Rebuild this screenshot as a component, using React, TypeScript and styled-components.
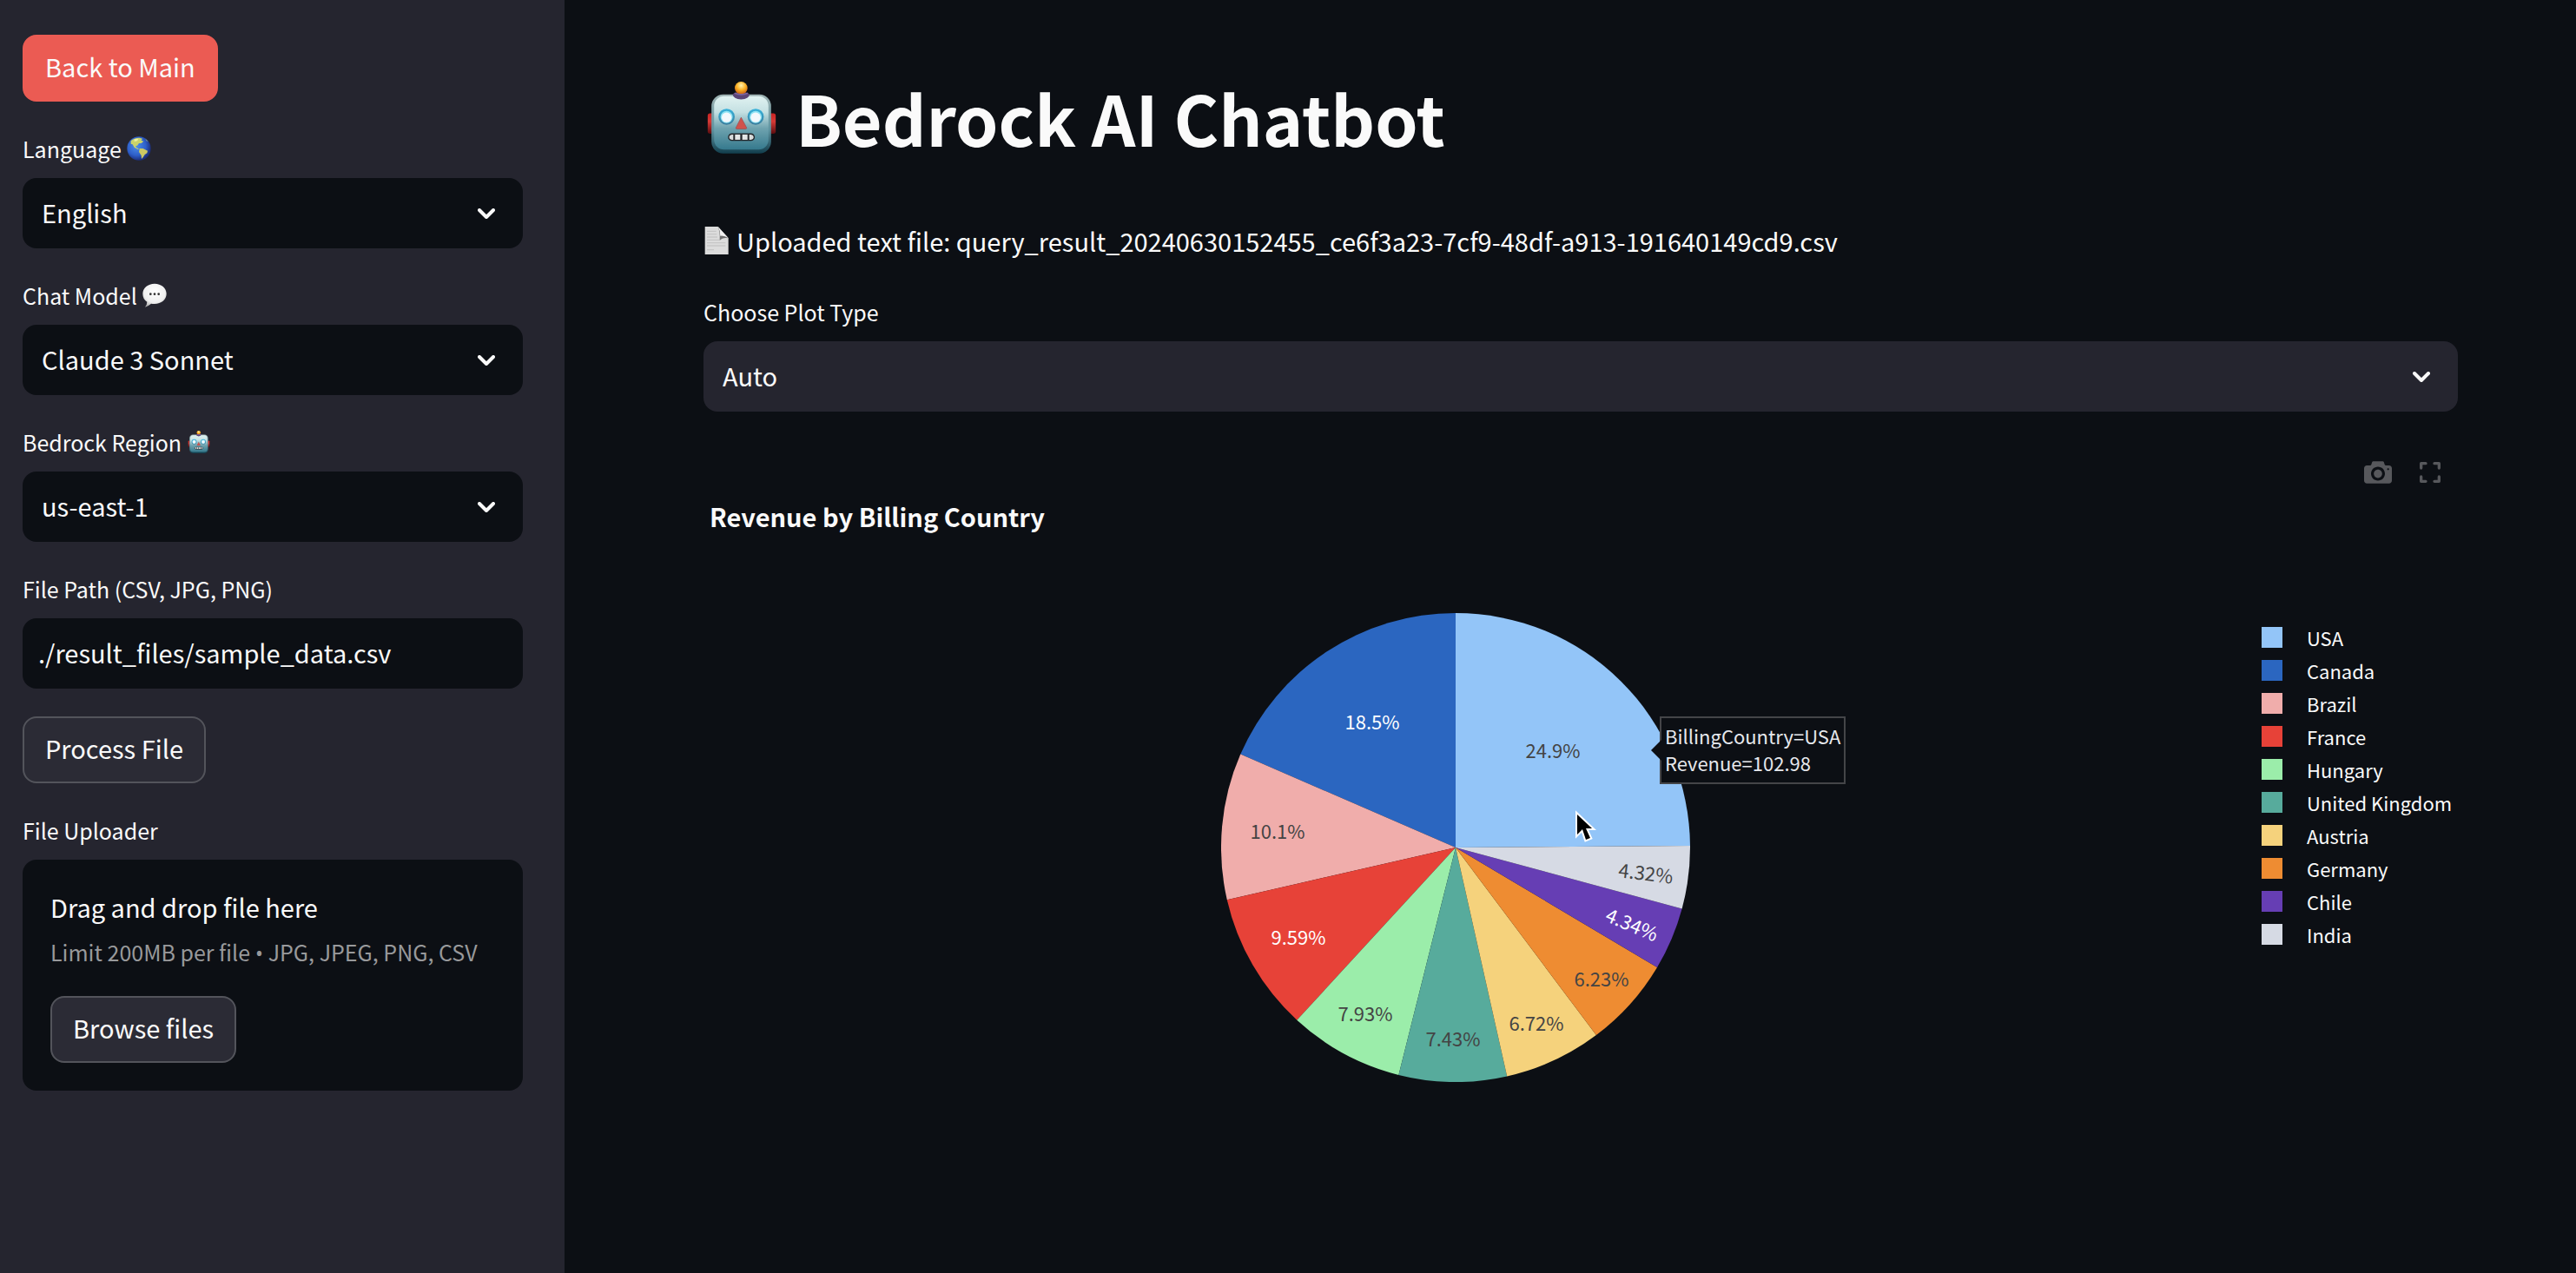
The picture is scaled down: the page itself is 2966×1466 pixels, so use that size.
import React, { useId } from "react";
import styled, { createGlobalStyle, ThemeProvider } from "styled-components";

const theme = {
  bg: "#0c0f14",
  panel: "#25252f",
  button: "#2b2b35",
  border: "#53545b",
  text: "#fafafa",
  muted: "#98999b",
  accent: "#eb5b53",
  icon: "#57585c",
  radius: "16px",
};

type Theme = typeof theme;

const GlobalStyle = createGlobalStyle<{ theme: Theme }>`
  *, *::before, *::after { box-sizing: border-box; }
  body {
    margin: 0;
    background: ${({ theme }) => theme.bg};
    color: ${({ theme }) => theme.text};
    font-family: "Noto Sans CJK SC", "Noto Sans", sans-serif;
    font-size: 29px;
    line-height: 48px;
  }
  h1, h2, p, ul { margin: 0; padding: 0; }
  button, input, select { font: inherit; color: inherit; margin: 0; }
`;

const Page = styled.div`
  display: flex;
  min-height: 100vh;
`;

const Sidebar = styled.aside`
  flex: 0 0 650px;
  display: flex;
  flex-direction: column;
  align-items: stretch;
  gap: 32px;
  padding: 40px 48px 40px 26px;
  background: ${({ theme }) => theme.panel};
`;

const Main = styled.main`
  flex: 1;
  min-width: 0;
  display: flex;
  flex-direction: column;
  padding: 82px 136px 80px 160px;
`;

const Button = styled.button<{ $primary?: boolean }>`
  align-self: flex-start;
  padding: 0 24px 4px;
  line-height: 69px;
  border: 2px solid ${({ theme, $primary }) => ($primary ? theme.accent : theme.border)};
  border-radius: ${({ theme }) => theme.radius};
  background: ${({ theme, $primary }) => ($primary ? theme.accent : theme.button)};
  cursor: pointer;
`;

const Field = styled.div`
  display: flex;
  flex-direction: column;
  gap: 12px;
`;

const Label = styled.label`
  display: flex;
  align-items: center;
  gap: 6px;
  font-size: 25px;
  line-height: 44px;
`;

const SelectWrap = styled.div`
  position: relative;
  display: flex;
`;

const SelectBox = styled.select<{ $onMain?: boolean }>`
  appearance: none;
  width: 100%;
  height: 81px;
  padding: 0 64px 4px 22px;
  border: 0;
  border-radius: ${({ theme }) => theme.radius};
  background: ${({ theme, $onMain }) => ($onMain ? theme.panel : theme.bg)};
`;

const Chevron = styled.svg`
  position: absolute;
  right: 32px;
  top: 50%;
  margin-top: -6px;
  pointer-events: none;
`;

const TextBox = styled.input`
  width: 100%;
  height: 81px;
  padding: 0 18px 4px;
  border: 0;
  border-radius: ${({ theme }) => theme.radius};
  background: ${({ theme }) => theme.bg};
`;

const FieldTitle = styled.p`
  font-size: 25px;
  line-height: 44px;
`;

const DropZone = styled.section`
  display: flex;
  flex-direction: column;
  gap: 4px;
  padding: 30px 32px 32px;
  border-radius: ${({ theme }) => theme.radius};
  background: ${({ theme }) => theme.bg};
`;

const DropHint = styled.p`
  margin-bottom: 22px;
  font-size: 25px;
  white-space: nowrap;
  color: ${({ theme }) => theme.muted};
`;

const Bullet = styled.span`
  font-family: "Open Sans", sans-serif;
`;

const Title = styled.h1`
  display: flex;
  align-items: center;
  gap: 18px;
  font-size: 79px;
  line-height: 106px;
  font-weight: 700;
`;

const FileNote = styled.p`
  display: flex;
  align-items: center;
  gap: 8px;
  margin: 65px 0 36px;
`;

const Toolbar = styled.div`
  display: flex;
  justify-content: flex-end;
  gap: 32px;
  height: 32px;
  margin-top: 54px;
  padding-right: 20px;
`;

const ToolButton = styled.button`
  display: flex;
  align-items: center;
  padding: 0;
  border: 0;
  background: none;
  color: ${({ theme }) => theme.icon};
  cursor: pointer;
`;

const ChartTitle = styled.h2`
  margin-top: 10px;
  padding-left: 7px;
  font-size: 29px;
  font-weight: 700;
`;

const ChartRow = styled.div`
  display: flex;
  align-items: flex-start;
  gap: 62px;
  margin-top: 88px;
`;

const PlotArea = styled.div`
  flex: 1;
  display: flex;
  justify-content: center;
`;

const Plot = styled.div`
  position: relative;
`;

const SliceText = styled.text`
  font-size: 22px;
  text-anchor: middle;
`;

const Tooltip = styled.div`
  position: absolute;
  left: 505px;
  top: 119px;
  padding: 5px 4px 7px;
  border: 2px solid #444548;
  background: ${({ theme }) => theme.bg};
  color: #e6e8ec;
  font-size: 22px;
  line-height: 31px;
  white-space: nowrap;

  &::before {
    content: "";
    position: absolute;
    left: -12px;
    top: 25px;
    border-style: solid;
    border-width: 12px 12px 12px 0;
    border-color: transparent ${({ theme }) => theme.bg} transparent transparent;
  }
`;

const Legend = styled.ul`
  flex: 0 0 226px;
  margin-top: 9px;
  list-style: none;
`;

const LegendItem = styled.li`
  display: flex;
  align-items: center;
  gap: 28px;
  font-size: 22px;
  line-height: 38px;
  white-space: nowrap;
`;

const Swatch = styled.span<{ $color: string }>`
  width: 24px;
  height: 24px;
  background: ${({ $color }) => $color};
`;

function RobotIcon({ width, height }: { width: number; height: number }) {
  const id = useId();
  return (
    <svg width={width} height={height} viewBox="46 34 236 248" aria-hidden="true">
      <defs>
        <linearGradient id={`${id}f`} x1="0" y1="0" x2="0" y2="1">
          <stop offset="0" stopColor="#e0f2f1" />
          <stop offset="0.3" stopColor="#c4e0e2" />
          <stop offset="0.6" stopColor="#6fa3af" />
          <stop offset="1" stopColor="#35798d" />
        </linearGradient>
        <linearGradient id={`${id}e`} x1="0" y1="0" x2="0" y2="1">
          <stop offset="0" stopColor="#9fb3b3" />
          <stop offset="0.6" stopColor="#5e93a0" />
          <stop offset="1" stopColor="#123e4d" />
        </linearGradient>
        <radialGradient id={`${id}b`} cx="0.5" cy="0.3" r="0.7">
          <stop offset="0" stopColor="#fff3b0" />
          <stop offset="0.5" stopColor="#fbb326" />
          <stop offset="1" stopColor="#c65a12" />
        </radialGradient>
        <linearGradient id={`${id}r`} x1="0" y1="0" x2="0" y2="1">
          <stop offset="0" stopColor="#c82222" />
          <stop offset="0.4" stopColor="#d63a36" />
          <stop offset="1" stopColor="#5c0d10" />
        </linearGradient>
        <linearGradient id={`${id}y`} x1="0" y1="0" x2="0" y2="1">
          <stop offset="0" stopColor="#37b3dc" />
          <stop offset="1" stopColor="#3a7c9c" />
        </linearGradient>
      </defs>
      <rect x="47" y="143" width="22" height="70" rx="8" fill={`url(#${id}r)`} />
      <rect x="259" y="143" width="22" height="70" rx="8" fill={`url(#${id}r)`} />
      <rect x="60" y="78" width="205" height="203" rx="40" fill={`url(#${id}e)`} />
      <rect x="69" y="84" width="187" height="184" rx="34" fill={`url(#${id}f)`} />
      <path d="M133 78 Q135 94 162 95 Q189 94 191 78 Q184 70 162 71 Q140 70 133 78Z" fill="#5a4475" />
      <circle cx="162" cy="56" r="22" fill={`url(#${id}b)`} />
      <path d="M141 71 Q162 80 184 71 L186 76 Q162 86 138 76Z" fill="#7c64a0" />
      <circle cx="112" cy="155" r="28" fill={`url(#${id}y)`} />
      <circle cx="212" cy="155" r="28" fill={`url(#${id}y)`} />
      <circle cx="112" cy="156" r="21" fill="#8fe3f4" />
      <circle cx="212" cy="156" r="21" fill="#8fe3f4" />
      <circle cx="112" cy="157" r="17" fill="#f3f8fc" />
      <circle cx="212" cy="157" r="17" fill="#f3f8fc" />
      <path d="M162 157 L181 193 Q181 197 177 197 L148 197 Q143 197 144 193Z" fill="#d0524c" stroke="#97494d" strokeWidth="2" />
      <rect x="117" y="212" width="92" height="26" rx="13" fill="#23262a" />
      <path d="M135 216 V234 H130 Q121 232 121 225 Q121 218 130 216Z" fill="#d9dcdc" />
      <rect x="141" y="216" width="18" height="18" fill="#e4e6e6" />
      <rect x="166" y="216" width="18" height="18" fill="#e4e6e6" />
      <path d="M190 216 V234 H196 Q205 232 205 225 Q205 218 196 216Z" fill="#d9dcdc" />
    </svg>
  );
}

function GlobeIcon() {
  return (
    <svg width="28" height="28" viewBox="0 0 84 84" aria-hidden="true">
      <defs>
        <radialGradient id="globe-sea" cx="0.4" cy="0.4" r="0.6">
          <stop offset="0" stopColor="#4d8fe8" />
          <stop offset="0.65" stopColor="#2e5fc9" />
          <stop offset="1" stopColor="#1c2f7d" />
        </radialGradient>
      </defs>
      <circle cx="42" cy="42" r="41" fill="url(#globe-sea)" />
      <path d="M14 16 Q26 4 44 5 L54 8 L50 14 L58 17 L50 24 L42 24 L36 32 L30 33 L34 40 L42 43 L38 45 L26 38 L20 28 L14 26Z" fill="#c9d36a" />
      <path d="M26 10 L40 8 L36 16 L26 18Z" fill="#eef0a0" />
      <path d="M44 42 L56 42 L72 50 L70 58 L62 63 L56 73 L51 78 L50 66 L42 54Z" fill="#cdc963" />
      <path d="M64 8 L74 18 L68 16Z" fill="#9db77a" />
    </svg>
  );
}

function BubbleIcon() {
  return (
    <svg width="28" height="28" viewBox="0 0 84 84" aria-hidden="true">
      <defs>
        <radialGradient id="bubble-fill" cx="0.5" cy="0.35" r="0.65">
          <stop offset="0" stopColor="#ffffff" />
          <stop offset="0.7" stopColor="#f0f0f0" />
          <stop offset="1" stopColor="#b5b5b5" />
        </radialGradient>
      </defs>
      <path d="M42 2 C65 2 83 17 83 37 C83 58 65 72 42 72 Q34 72 30 71 Q20 80 9 83 Q16 74 16 65 Q1 56 1 37 C1 17 19 2 42 2Z" fill="url(#bubble-fill)" />
      <circle cx="28" cy="38" r="4" fill="#333" />
      <circle cx="42" cy="38" r="4" fill="#333" />
      <circle cx="56" cy="38" r="4" fill="#333" />
    </svg>
  );
}

function PageIcon() {
  return (
    <svg width="30" height="32" viewBox="-4 0 90 96" aria-hidden="true">
      <path d="M1 0 H46 L82 40 V96 H1Z" fill="#dcdcdc" />
      <path d="M8 16 H40 M8 26 H42 M8 36 H44 M8 46 H50 M8 56 H72 M8 66 H72 M8 80 H32" stroke="#c6c6c6" strokeWidth="4" />
      <path d="M46 0 L82 40 Q62 36 52 48 Q54 20 46 0Z" fill="#6e6e6e" />
      <path d="M46 0 L82 40 Q68 30 54 32 Q54 14 46 0Z" fill="#f1f1f1" />
    </svg>
  );
}

function CameraIcon() {
  return (
    <svg width="32" height="26" viewBox="0 0 1000 800" aria-hidden="true">
      <path
        transform="matrix(1 0 0 -1 0 750)"
        fill="currentColor"
        d="m500 450c-83 0-150-67-150-150 0-83 67-150 150-150 83 0 150 67 150 150 0 83-67 150-150 150z m400 150h-120c-16 0-34 13-39 29l-31 93c-6 15-23 28-40 28h-340c-16 0-34-13-39-28l-31-94c-6-15-23-28-40-28h-120c-55 0-100-45-100-100v-450c0-55 45-100 100-100h800c55 0 100 45 100 100v450c0 55-45 100-100 100z m-400-550c-138 0-250 112-250 250 0 138 112 250 250 250 138 0 250-112 250-250 0-138-112-250-250-250z m365 380c-19 0-35 16-35 35 0 19 16 35 35 35 19 0 35-16 35-35 0-19-16-35-35-35z"
      />
    </svg>
  );
}

function FullscreenIcon() {
  return (
    <svg width="24" height="24" viewBox="0 0 72 72" aria-hidden="true">
      <path
        d="M5 21 V5 H21 M51 5 H67 V21 M67 51 V67 H51 M21 67 H5 V51"
        fill="none"
        stroke="currentColor"
        strokeWidth="10"
        strokeLinecap="round"
        strokeLinejoin="round"
      />
    </svg>
  );
}

interface PickerProps {
  id: string;
  label: string;
  value: string;
  icon?: React.ReactNode;
  onMain?: boolean;
}

function Picker({ id, label, value, icon, onMain }: PickerProps) {
  return (
    <Field>
      <Label htmlFor={id}>
        {label}
        {icon}
      </Label>
      <SelectWrap>
        <SelectBox id={id} defaultValue={value} $onMain={onMain}>
          <option value={value}>{value}</option>
        </SelectBox>
        <Chevron width="20" height="12" viewBox="0 0 20 12" aria-hidden="true">
          <path d="M2 2 L10 10 L18 2" fill="none" stroke="#fafafa" strokeWidth="4" strokeLinecap="round" strokeLinejoin="round" />
        </Chevron>
      </SelectWrap>
    </Field>
  );
}

interface Slice {
  name: string;
  share: number;
  label: string;
  color: string;
  ink: string;
  x: number;
  y: number;
  turn?: number;
}

const DARK = "#444444";
const LIGHT = "#ffffff";

const slices: Slice[] = [
  { name: "USA", share: 24.9, label: "24.9%", color: "#93c5f8", ink: DARK, x: 112, y: -111 },
  { name: "Canada", share: 18.5, label: "18.5%", color: "#2b66c0", ink: LIGHT, x: -96, y: -144 },
  { name: "Brazil", share: 10.1, label: "10.1%", color: "#f0adab", ink: DARK, x: -205, y: -18 },
  { name: "France", share: 9.59, label: "9.59%", color: "#e74238", ink: LIGHT, x: -181, y: 104 },
  { name: "Hungary", share: 7.93, label: "7.93%", color: "#9bedaa", ink: DARK, x: -104, y: 192 },
  { name: "United Kingdom", share: 7.43, label: "7.43%", color: "#57ab9c", ink: DARK, x: -3, y: 221 },
  { name: "Austria", share: 6.72, label: "6.72%", color: "#f5d27c", ink: DARK, x: 93, y: 203 },
  { name: "Germany", share: 6.23, label: "6.23%", color: "#ee8c32", ink: DARK, x: 168, y: 152 },
  { name: "Chile", share: 4.34, label: "4.34%", color: "#663eb4", ink: LIGHT, x: 203, y: 89, turn: 23 },
  { name: "India", share: 4.32, label: "4.32%", color: "#d6dae4", ink: DARK, x: 219, y: 30, turn: 7 },
];

const RADIUS = 270;

function wedge(from: number, to: number) {
  const point = (turn: number) => {
    const a = turn * Math.PI * 2;
    return `${(Math.sin(a) * RADIUS).toFixed(2)} ${(-Math.cos(a) * RADIUS).toFixed(2)}`;
  };
  return `M0 0 L${point(from)} A${RADIUS} ${RADIUS} 0 0 1 ${point(to)} Z`;
}

function PieChart() {
  const total = slices.reduce((sum, s) => sum + s.share, 0);
  // The largest slice leads clockwise from noon; the others follow counter-clockwise.
  let end = 1;
  return (
    <svg width="540" height="540" viewBox="-270 -270 540 540" role="img" aria-label="Revenue by Billing Country">
      {slices.map((s, i) => {
        const part = s.share / total;
        const from = i === 0 ? 0 : end - part;
        const to = i === 0 ? part : end;
        if (i > 0) end = from;
        return <path key={s.name} d={wedge(from, to)} fill={s.color} />;
      })}
      {slices.map((s) => (
        <SliceText key={s.name} fill={s.ink} transform={`translate(${s.x} ${s.y}) rotate(${s.turn ?? 0})`} y="8">
          {s.label}
        </SliceText>
      ))}
      <g transform="translate(138 -43)">
        <path
          d="M2 5 L2 28 L8 22 L12 34 L17 32 L12 21 L19 21 Z"
          fill="#000"
          stroke="#fff"
          strokeWidth="4"
          paintOrder="stroke"
        />
      </g>
    </svg>
  );
}

export default function App() {
  return (
    <ThemeProvider theme={theme}>
      <GlobalStyle />
      <Page>
        <Sidebar>
          <Button type="button" $primary>
            Back to Main
          </Button>
          <Picker id="language" label="Language" value="English" icon={<GlobeIcon />} />
          <Picker id="model" label="Chat Model" value="Claude 3 Sonnet" icon={<BubbleIcon />} />
          <Picker id="region" label="Bedrock Region" value="us-east-1" icon={<RobotIcon width={28} height={26} />} />
          <Field>
            <Label htmlFor="path">File Path (CSV, JPG, PNG)</Label>
            <TextBox id="path" type="text" defaultValue="./result_files/sample_data.csv" />
          </Field>
          <Button type="button">Process File</Button>
          <Field>
            <FieldTitle id="uploader">File Uploader</FieldTitle>
            <DropZone aria-labelledby="uploader">
              <p>Drag and drop file here</p>
              <DropHint>
                Limit 200MB per file <Bullet>•</Bullet> JPG, JPEG, PNG, CSV
              </DropHint>
              <Button type="button">Browse files</Button>
            </DropZone>
          </Field>
        </Sidebar>
        <Main>
          <Title>
            <RobotIcon width={88} height={83} />
            Bedrock AI Chatbot
          </Title>
          <FileNote>
            <PageIcon />
            Uploaded text file: query_result_20240630152455_ce6f3a23-7cf9-48df-a913-191640149cd9.csv
          </FileNote>
          <Picker id="plot" label="Choose Plot Type" value="Auto" onMain />
          <Toolbar>
            <ToolButton type="button" aria-label="Download plot as a png">
              <CameraIcon />
            </ToolButton>
            <ToolButton type="button" aria-label="Fullscreen">
              <FullscreenIcon />
            </ToolButton>
          </Toolbar>
          <ChartTitle>Revenue by Billing Country</ChartTitle>
          <ChartRow>
            <PlotArea>
              <Plot>
                <PieChart />
                <Tooltip>
                  BillingCountry=USA
                  <br />
                  Revenue=102.98
                </Tooltip>
              </Plot>
            </PlotArea>
            <Legend>
              {slices.map((s) => (
                <LegendItem key={s.name}>
                  <Swatch $color={s.color} />
                  {s.name}
                </LegendItem>
              ))}
            </Legend>
          </ChartRow>
        </Main>
      </Page>
    </ThemeProvider>
  );
}
